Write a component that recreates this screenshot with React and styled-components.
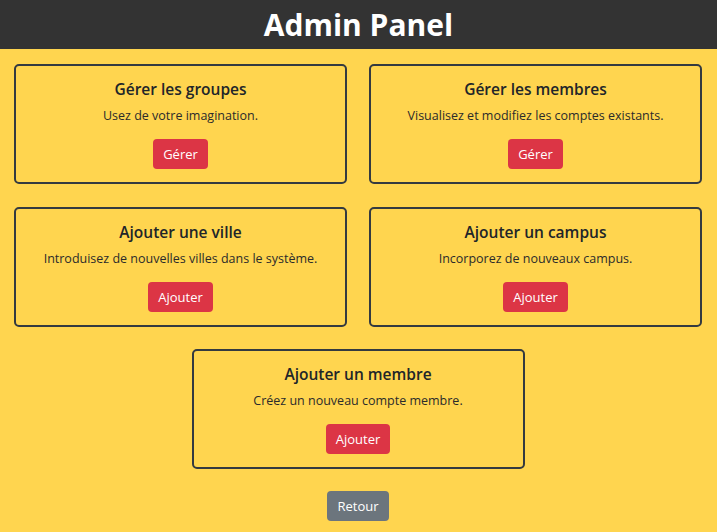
import React from "react";
import styled, { createGlobalStyle } from "styled-components";

const Global = createGlobalStyle`
  html, body { margin: 0; padding: 0; }
  body {
    background: #ffd54f;
    font-family: "Open Sans", "Noto Sans", sans-serif;
    color: #212529;
  }
  * { box-sizing: border-box; }
`;

const Header = styled.header`
  background: #333333;
  height: 49px;
  display: flex;
  align-items: center;
  justify-content: center;
`;

const Title = styled.h1`
  margin: 0;
  color: #ffffff;
  font-size: 30px;
  font-weight: 700;
  line-height: 1;
`;

const Main = styled.main`
  padding: 15px 15px 10px 14px;
  display: flex;
  flex-direction: column;
  align-items: center;
  gap: 22px;
`;

const Grid = styled.div`
  width: 100%;
  display: grid;
  grid-template-columns: 1fr 1fr;
  column-gap: 22px;
  row-gap: 23px;
`;

const Card = styled.section`
  border: 2px solid #343a40;
  border-radius: 5px;
  padding: 14px 16px 13px;
  height: 120px;
  display: flex;
  flex-direction: column;
  align-items: center;
  text-align: center;
  ${(p) => p.$single && `width: 333px;`}
`;

const CardTitle = styled.h5`
  margin: 0 0 7px;
  font-size: 15.5px;
  font-weight: 600;
  line-height: 19px;
  color: #212529;
`;

const CardText = styled.p`
  margin: 0 0 13px;
  font-size: 12.5px;
  line-height: 19.5px;
  color: #2b2b2b;
`;

const Button = styled.button`
  border: none;
  border-radius: 4px;
  height: 30px;
  padding: 0 10px;
  font-family: inherit;
  font-size: 13px;
  color: #ffffff;
  background: ${(p) => (p.$variant === "secondary" ? "#6c757d" : "#dc3545")};
  cursor: pointer;
`;

const cards = [
  { title: "Gérer les groupes", text: "Usez de votre imagination.", action: "Gérer" },
  { title: "Gérer les membres", text: "Visualisez et modifiez les comptes existants.", action: "Gérer" },
  { title: "Ajouter une ville", text: "Introduisez de nouvelles villes dans le système.", action: "Ajouter" },
  { title: "Ajouter un campus", text: "Incorporez de nouveaux campus.", action: "Ajouter" },
];

function AdminCard({ title, text, action, single }) {
  return (
    <Card $single={single}>
      <CardTitle>{title}</CardTitle>
      <CardText>{text}</CardText>
      <Button>{action}</Button>
    </Card>
  );
}

export default function App() {
  return (
    <>
      <Global />
      <Header>
        <Title>Admin Panel</Title>
      </Header>
      <Main>
        <Grid>
          {cards.map((c) => (
            <AdminCard key={c.title} {...c} />
          ))}
        </Grid>
        <AdminCard
          single
          title="Ajouter un membre"
          text="Créez un nouveau compte membre."
          action="Ajouter"
        />
        <Button $variant="secondary">Retour</Button>
      </Main>
    </>
  );
}
